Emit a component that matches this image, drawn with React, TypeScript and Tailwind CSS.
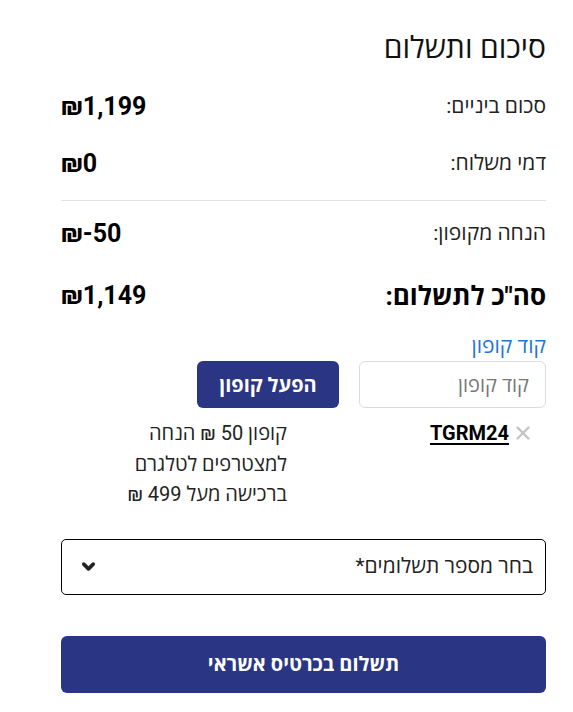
import { ChevronDown, X } from 'lucide-react';

// שורת סיכום: תווית מימין, סכום משמאל
function SummaryRow({ label, value, big }: { label: string; value: string; big?: boolean }) {
  return (
    <div className="flex h-[30px] items-center justify-between">
      <span className={big ? 'text-[26px] font-bold text-black' : 'text-[21px] text-[#222]'}>{label}</span>
      <span className="text-[25px] font-bold text-black" dir="ltr">{value}</span>
    </div>
  );
}

export default function App() {
  return (
    <div
      dir="rtl"
      className="min-h-screen bg-white text-[#222]"
      style={{ fontFamily: 'Roboto, "Open Sans", "Noto Sans", sans-serif' }}
    >
      <div className="ml-[61px] mr-[27px] pt-[30px]">
        <h2 className="text-[30px] font-normal leading-[36px] text-[#111]">סיכום ותשלום</h2>

        <div className="mt-[26px] flex flex-col gap-[27px]">
          <SummaryRow label="סכום ביניים:" value="₪1,199" />
          <SummaryRow label="דמי משלוח:" value="₪0" />
        </div>

        <div className="mt-[21px] border-t border-[#e2e2e2]" />

        <div className="mt-[18px] flex flex-col gap-[32px]">
          <SummaryRow label="הנחה מקופון:" value="₪-50" />
          <SummaryRow label="סה&quot;כ לתשלום:" value="₪1,149" big />
        </div>

        <div className="mt-[23px]">
          <a href="#" className="block text-[21px] leading-[24px] text-[#1f75d6]">קוד קופון</a>
          <div className="mt-[3px] flex gap-[20px]">
            <input
              placeholder="קוד קופון"
              className="h-[47px] w-[187px] rounded-[6px] border border-[#dcdcdc] px-[16px] text-[20px] text-[#222] placeholder:text-[#777] outline-none"
            />
            <button className="h-[47px] w-[142px] rounded-[6px] bg-[#2a3583] text-[20px] font-bold text-white">
              הפעל קופון
            </button>
          </div>
        </div>

        <div className="mt-[10px] flex">
          <div className="flex h-[30px] w-[259px] items-center gap-[3px] pr-[12px]">
            <X className="h-[22px] w-[22px] text-[#c4c4c4]" strokeWidth={2.6} />
            <span className="text-[20px] font-bold leading-[30px] text-black underline underline-offset-[3px]">TGRM24</span>
          </div>
          <div className="text-[20px] leading-[30.5px] text-[#222]">
            קופון 50 ₪ הנחה
            <br />
            למצטרפים לטלגרם
            <br />
            ברכישה מעל 499 ₪
          </div>
        </div>

        <div className="mt-[29px] flex h-[56px] items-center justify-between rounded-[5px] border border-black pl-[17px] pr-[12px]">
          <span className="text-[21px] text-[#222]">בחר מספר תשלומים*</span>
          <ChevronDown className="h-[19px] w-[19px]" strokeWidth={4.5} />
        </div>

        <button className="mt-[41px] h-[57px] w-full rounded-[6px] bg-[#2a3583] text-[20px] font-bold text-white">
          תשלום בכרטיס אשראי
        </button>
      </div>
    </div>
  );
}
